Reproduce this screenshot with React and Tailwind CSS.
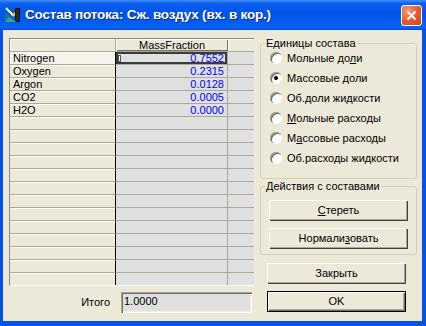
import { useState } from 'react'

const rows = [
  ['Nitrogen', '0.7552'],
  ['Oxygen', '0.2315'],
  ['Argon', '0.0128'],
  ['CO2', '0.0005'],
  ['H2O', '0.0000'],
  ...Array.from({ length: 13 }, () => ['', '']),
]

const units = [
  { label: 'Мольные доли', pre: 'Мольные до', key: 'л', post: 'и' },
  { label: 'Массовые доли', pre: 'Массовые ', key: 'д', post: 'оли' },
  { label: 'Об.доли жидкости', pre: 'Об.доли жидкости', key: '', post: '' },
  { label: 'Мольные расходы', pre: '', key: 'М', post: 'ольные расходы' },
  { label: 'Массовые расходы', pre: 'М', key: 'а', post: 'ссовые расходы' },
  { label: 'Об.расходы жидкости', pre: 'Об.расходы жидкости', key: '', post: '' },
]

function AppIcon() {
  return (
    <svg width="16" height="16" viewBox="0 0 16 16">
      <rect x="10" y="1" width="5" height="14" fill="#111" />
      <rect x="11" y="2" width="3" height="12" fill="#2a2a2a" />
      <polygon points="0,15 11,15 0,5" fill="#1f7a78" />
      <polygon points="0,15 11,15 4,10" fill="#2fa39e" />
      <line x1="1" y1="1" x2="9" y2="9" stroke="#fff" strokeWidth="2" />
      <line x1="2" y1="1" x2="10" y2="9" stroke="#f4d400" strokeWidth="1" />
      <polygon points="6,9 10,9 10,5" fill="#f4d400" />
    </svg>
  )
}

function Button({ children, primary }) {
  return (
    <button
      className={`h-[21px] w-[139px] ml-[8px] bg-[#ece9d8] text-[11px] text-black ${
        primary
          ? 'border border-black shadow-[inset_1px_1px_#fff,inset_-1px_-1px_#716f64,inset_-2px_-2px_#aca899]'
          : 'shadow-[inset_1px_1px_#fff,inset_-1px_-1px_#404040,inset_-2px_-2px_#aca899]'
      }`}
    >
      {children}
    </button>
  )
}

export default function App() {
  const [unit, setUnit] = useState(1)

  return (
    <div className="w-[426px] h-[326px] flex flex-col bg-[#0553e4] font-['Liberation_Sans',Arial,sans-serif] select-none">
      <div className="h-[30px] shrink-0 flex items-center pl-[5px] pr-[4px] bg-[linear-gradient(180deg,#3d8ef8_0%,#0c5ef0_12%,#0055e5_45%,#0660f2_85%,#0a64f6_92%,#0047d6_100%)]">
        <AppIcon />
        <span className="ml-[4px] text-white font-bold text-[13.5px] tracking-[-0.2px] [text-shadow:1px_1px_#0a2a8a]">
          Состав потока: Сж. воздух (вх. в кор.)
        </span>
        <div className="ml-auto w-[21px] h-[21px] rounded-[3px] border border-white bg-[radial-gradient(circle_at_30%_25%,#f19a7c_0%,#e4582f_55%,#cc4217_100%)] flex items-center justify-center">
          <svg width="11" height="11" viewBox="0 0 11 11">
            <path d="M1.5 1.5 L9.5 9.5 M9.5 1.5 L1.5 9.5" stroke="#fff" strokeWidth="2" />
          </svg>
        </div>
      </div>

      <div className="flex-1 ml-[3px] mr-[4px] mb-[5px] bg-[#ece9d8] flex pl-[6px] pt-[8px] text-[11px] text-black">
        <div className="w-[245px] flex flex-col">
          <div className="h-[248px] overflow-hidden border-t border-l border-[#8c8a7e] border-b border-b-white">
            <div className="flex h-[13px]">
              <div className="w-[106px] h-full border-b border-r border-[#aca899] shadow-[inset_1px_1px_#fff]" />
              <div className="w-[112px] h-full leading-[12px] text-center border-b border-[#aca899] shadow-[inset_1px_1px_#fff,inset_-1px_-1px_#716f64]">
                MassFraction
              </div>
              <div className="flex-1 h-full border-b border-[#aca899] shadow-[inset_1px_1px_#fff]" />
            </div>
            {rows.map(([name, value], i) => (
              <div key={i} className="flex h-[13px]">
                <div
                  className={`w-[106px] h-full pl-[3px] leading-[12px] border-b border-[#aca899] border-r border-r-black ${
                    i === 0 ? 'bg-[#f6f4ea] shadow-[inset_1px_1px_#fff,inset_-1px_0_#fff]' : 'shadow-[inset_0_1px_#fff]'
                  }`}
                >
                  {name}
                </div>
                <div
                  className={`relative w-[112px] h-full pr-[3px] text-right leading-[12px] text-[#0000ff] bg-[#e0e0e0] border-b border-r border-[#aca899] ${
                    i === 0 ? 'shadow-[inset_0_0_0_2px_#3a3a3a]' : ''
                  }`}
                >
                  {i === 0 && (
                    <span className="absolute left-[2px] top-[3px] w-[3px] h-[7px] bg-white border border-[#555]" />
                  )}
                  {value}
                </div>
                <div className="flex-1 h-full bg-[#e0e0e0] border-b border-[#aca899]" />
              </div>
            ))}
          </div>
          <div className="flex items-center justify-end pr-[2px] mt-[6px]">
            <span className="mr-[11px]">Итого</span>
            <div className="w-[131px] h-[21px] pl-[3px] pt-[3px] leading-[12px] bg-[#e0e0e0] shadow-[inset_1px_1px_#aca899,inset_2px_2px_#716f64,inset_-1px_-1px_#fff,inset_-2px_-2px_#f1efe2]">
              1.0000
            </div>
          </div>
        </div>

        <div className="ml-[6px] w-[157px] flex flex-col">
          <fieldset className="border border-[#d0d0bf] rounded-[3px] pb-[10px]">
            <legend className="ml-[4px] px-[1px] leading-[11px]">Единицы состава</legend>
            <div className="flex flex-col -mt-[1px]">
              {units.map((u, i) => (
                <label key={u.label} className="h-[20px] flex items-center pl-[9px] cursor-default" onClick={() => setUnit(i)}>
                  <span className="w-[12px] h-[12px] rounded-full bg-white shadow-[inset_1px_1px_#aca899,inset_2px_2px_#716f64,inset_-1px_-1px_#fff] flex items-center justify-center">
                    {unit === i && <span className="w-[4px] h-[4px] rounded-full bg-black" />}
                  </span>
                  <span className="ml-[5px]">
                    {u.pre}
                    {u.key && <u>{u.key}</u>}
                    {u.post}
                  </span>
                </label>
              ))}
            </div>
          </fieldset>

          <fieldset className="mt-[2px] border border-[#d0d0bf] rounded-[3px] pb-[5px]">
            <legend className="ml-[4px] px-[1px] leading-[11px]">Действия с составами</legend>
            <div className="flex flex-col gap-[7px] pt-[8px]">
              <Button>
                <u>С</u>тереть
              </Button>
              <Button>
                Нормали<u>з</u>овать
              </Button>
            </div>
          </fieldset>

          <div className="flex flex-col gap-[7px] mt-[8px] -ml-[1px]">
            <Button>Закрыть</Button>
            <Button primary>OK</Button>
          </div>
        </div>
      </div>
    </div>
  )
}
